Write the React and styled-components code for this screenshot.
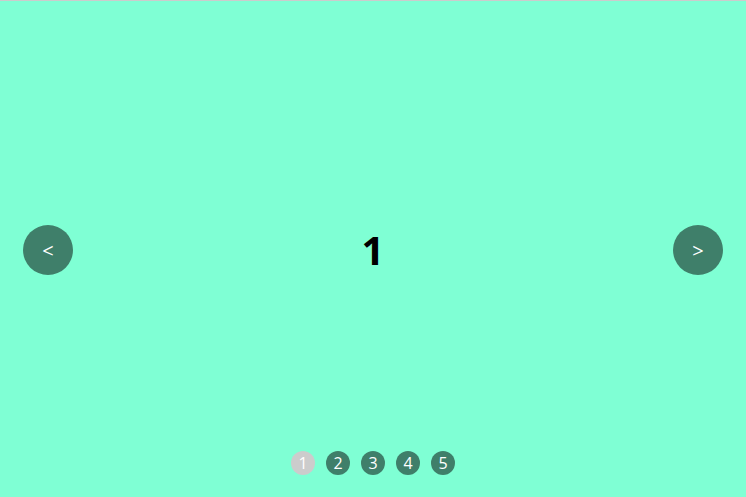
import React, { useState } from "react";
import styled, { createGlobalStyle } from "styled-components";

const GlobalStyle = createGlobalStyle`
  html, body {
    margin: 0;
    padding: 0;
  }
  body {
    font-family: 'Open Sans', 'DejaVu Sans', sans-serif;
  }
`;

const slides = [1, 2, 3, 4, 5];

const App = () => {
  const [current, setCurrent] = useState(0);
  const prev = () => setCurrent((current + slides.length - 1) % slides.length);
  const next = () => setCurrent((current + 1) % slides.length);

  return (
    <>
      <GlobalStyle />
      <Slider>
        <Track>
          <Arrow onClick={prev}>&lt;</Arrow>
          <Slide>{slides[current]}</Slide>
          <Arrow onClick={next}>&gt;</Arrow>
        </Track>
        <Dots>
          {slides.map((n, i) => (
            <Dot key={n} active={i === current} onClick={() => setCurrent(i)}>
              {n}
            </Dot>
          ))}
        </Dots>
      </Slider>
    </>
  );
};

const Slider = styled.div`
  position: relative;
  height: 497px;
  box-sizing: border-box;
  border-top: 1px solid #cccccc;
  background: #7fffd4;
  overflow: hidden;
`

const Track = styled.div`
  display: flex;
  align-items: center;
  height: 100%;
  padding: 2px 23px 0;
  box-sizing: border-box;
`

const Slide = styled.div`
  flex: 1;
  text-align: center;
  font-size: 40px;
  font-weight: 700;
  color: #000;
  line-height: 1;
`

const Arrow = styled.div`
  width: 50px;
  height: 50px;
  border-radius: 50%;
  background: rgba(0, 0, 0, 0.5);
  color: #fff;
  display: flex;
  align-items: center;
  justify-content: center;
  font-size: 20px;
  cursor: pointer;
`

const Dots = styled.div`
  position: absolute;
  left: 0;
  right: 0;
  bottom: 22px;
  display: flex;
  justify-content: center;
  gap: 11px;
`

const Dot = styled.div.withConfig({ shouldForwardProp: (p) => p !== "active" })`
  width: 24px;
  height: 24px;
  border-radius: 50%;
  background: ${(p) => (p.active ? "#cccccc" : "rgba(0, 0, 0, 0.5)")};
  color: #fff;
  font-size: 16px;
  display: flex;
  align-items: center;
  justify-content: center;
  cursor: pointer;
`

export default App;
